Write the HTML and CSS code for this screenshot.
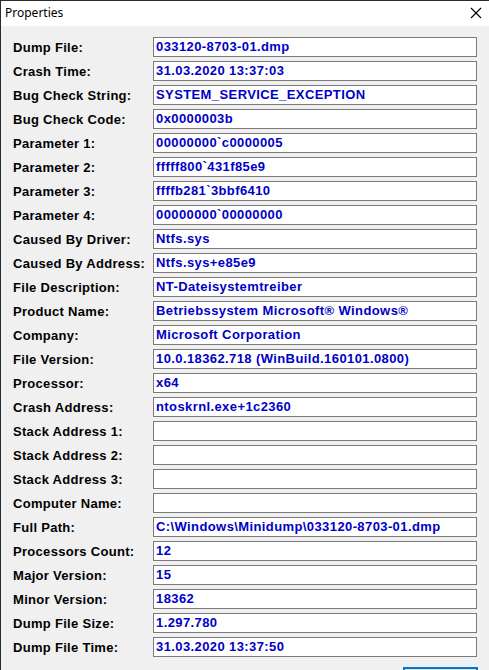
FILE: index.html
```html
<!DOCTYPE html>
<html>
<head>
<meta charset="utf-8">
<link rel="stylesheet" href="styles.css">
</head>
<body>
<div class="window">
  <div class="titlebar">
    <span class="title">Properties</span>
    <svg class="close" width="12" height="12" viewBox="0 0 12 12"><path d="M1 1 L11 11 M11 1 L1 11" stroke="#000" stroke-width="1.1" fill="none"/></svg>
  </div>
  <div class="content">
    <div class="rows">
      <div class="label">Dump File:</div><div class="field">033120-8703-01.dmp</div>
      <div class="label">Crash Time:</div><div class="field">31.03.2020 13:37:03</div>
      <div class="label">Bug Check String:</div><div class="field">SYSTEM_SERVICE_EXCEPTION</div>
      <div class="label">Bug Check Code:</div><div class="field">0x0000003b</div>
      <div class="label">Parameter 1:</div><div class="field">00000000`c0000005</div>
      <div class="label">Parameter 2:</div><div class="field">fffff800`431f85e9</div>
      <div class="label">Parameter 3:</div><div class="field">ffffb281`3bbf6410</div>
      <div class="label">Parameter 4:</div><div class="field">00000000`00000000</div>
      <div class="label">Caused By Driver:</div><div class="field">Ntfs.sys</div>
      <div class="label">Caused By Address:</div><div class="field">Ntfs.sys+e85e9</div>
      <div class="label">File Description:</div><div class="field">NT-Dateisystemtreiber</div>
      <div class="label">Product Name:</div><div class="field">Betriebssystem Microsoft® Windows®</div>
      <div class="label">Company:</div><div class="field">Microsoft Corporation</div>
      <div class="label">File Version:</div><div class="field">10.0.18362.718 (WinBuild.160101.0800)</div>
      <div class="label">Processor:</div><div class="field">x64</div>
      <div class="label">Crash Address:</div><div class="field">ntoskrnl.exe+1c2360</div>
      <div class="label">Stack Address 1:</div><div class="field"></div>
      <div class="label">Stack Address 2:</div><div class="field"></div>
      <div class="label">Stack Address 3:</div><div class="field"></div>
      <div class="label">Computer Name:</div><div class="field"></div>
      <div class="label">Full Path:</div><div class="field">C:\Windows\Minidump\033120-8703-01.dmp</div>
      <div class="label">Processors Count:</div><div class="field">12</div>
      <div class="label">Major Version:</div><div class="field">15</div>
      <div class="label">Minor Version:</div><div class="field">18362</div>
      <div class="label">Dump File Size:</div><div class="field">1.297.780</div>
      <div class="label">Dump File Time:</div><div class="field">31.03.2020 13:37:50</div>
    </div>
    <div class="buttons">
      <div class="button"></div>
    </div>
  </div>
</div>
</body>
</html>
```
FILE: styles.css
```css
html, body {
  margin: 0;
  padding: 0;
  background: #f0f0f0;
  height: 670px;
  overflow: hidden;
}
.window {
  border-top: 1px solid #2b2b2b;
  border-left: 1px solid #2b2b2b;
  height: 669px;
  background: #f0f0f0;
}
.titlebar {
  height: 25px;
  background: #ffffff;
  display: flex;
  align-items: center;
  justify-content: space-between;
  padding: 0 7px 0 4px;
}
.title {
  font-family: "Noto Sans", "Open Sans", sans-serif;
  font-size: 12px;
  color: #000;
  margin-top: -2px;
}
.close {
  margin-top: -1px;
}
.content {
  padding: 11px 0 0 12px;
}
.rows {
  display: grid;
  grid-template-columns: 140px 324px;
  grid-auto-rows: 20px;
  row-gap: 4px;
  align-items: center;
}
.label {
  font-family: "Liberation Sans", Arial, sans-serif;
  font-weight: bold;
  font-size: 13px;
  letter-spacing: 0.3px;
  color: #000;
}
.field {
  box-sizing: border-box;
  height: 20px;
  border: 1px solid #7a7a7a;
  background: #fff;
  padding: 0 2px;
  font-family: "Liberation Sans", Arial, sans-serif;
  font-weight: bold;
  font-size: 13px;
  letter-spacing: 0.4px;
  line-height: 18px;
  color: #0000c8;
  white-space: nowrap;
  overflow: hidden;
}
.buttons {
  display: flex;
  justify-content: flex-end;
  padding-right: 11px;
  margin-top: 10px;
}
.button {
  width: 71px;
  height: 22px;
  border: 2px solid #0078d7;
  background: #e1e1e1;
}
```
